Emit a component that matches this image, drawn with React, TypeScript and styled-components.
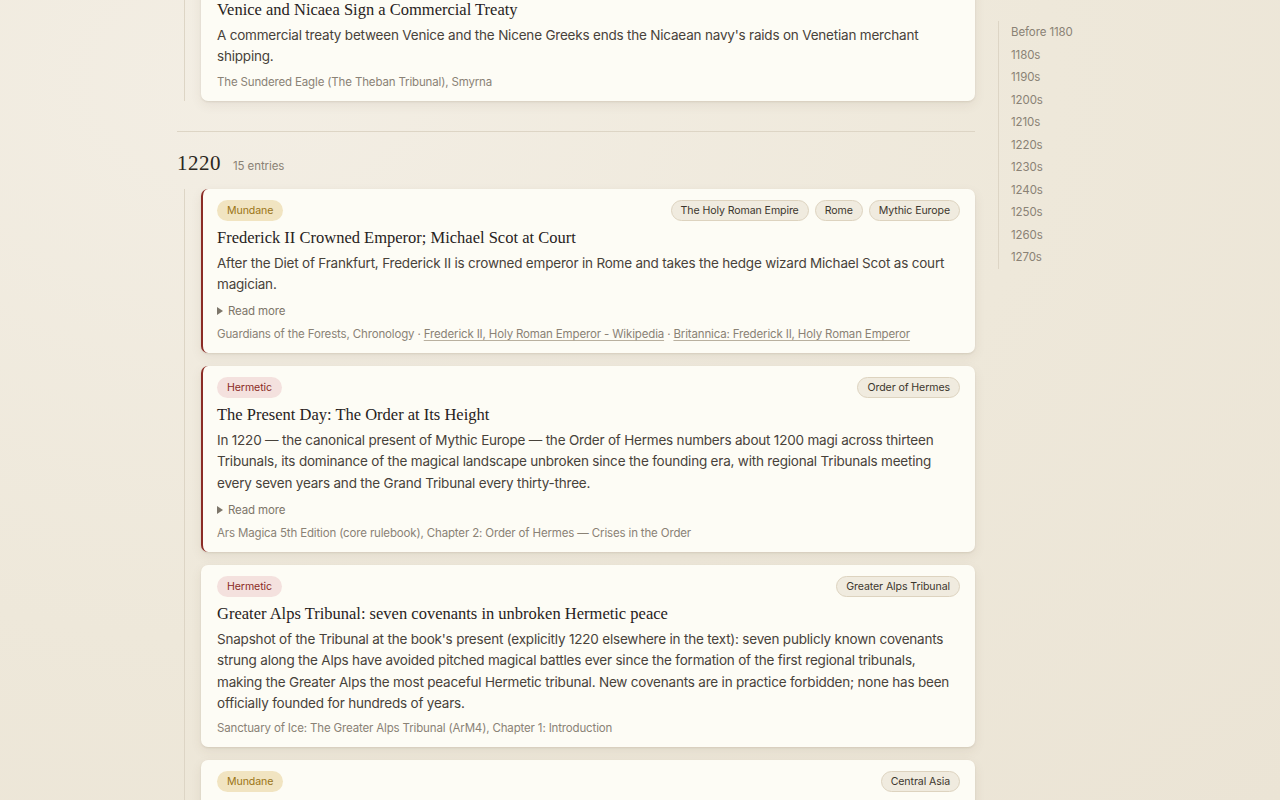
import React from 'react';
import styled, { createGlobalStyle } from 'styled-components';

type Kind = 'Mundane' | 'Hermetic';

interface Source {
  text: string;
  link?: boolean;
}

interface Entry {
  kind: Kind;
  tags: string[];
  title: string;
  body: string;
  more?: boolean;
  marked?: boolean;
  sources: Source[];
}

const GlobalStyle = createGlobalStyle`
  html, body {
    margin: 0;
    padding: 0;
    background: #efe9dc;
    font-family: Inter, "Noto Sans", sans-serif;
    overflow: hidden;
  }
  body {
    background: radial-gradient(ellipse at 20% 10%, #f3eee4 0%, #eee8da 55%, #ebe4d5 100%);
    min-height: 800px;
  }
`;

// Page frame: timeline column + decade index
const Page = styled.div`
  display: flex;
  gap: 23px;
  padding-left: 177px;
  height: 800px;
  overflow: hidden;
`;

const Main = styled.main`
  width: 798px;
  flex-shrink: 0;
`;

const Section = styled.section<{ $offset?: number }>`
  margin-top: ${(p) => p.$offset ?? 0}px;
`;

const YearHead = styled.div`
  display: flex;
  align-items: baseline;
  gap: 12px;
  height: 32px;
  margin: 19px 0 6px;
`;

const Year = styled.h2`
  margin: 0;
  font-family: "Liberation Serif", serif;
  font-weight: 400;
  font-size: 21px;
  color: #2b2620;
  letter-spacing: 0.5px;
`;

const Count = styled.span`
  font-size: 11.5px;
  letter-spacing: -0.1px;
  color: #8a8275;
`;

const Divider = styled.hr`
  border: 0;
  border-top: 1px solid #ddd5c5;
  margin: 30px 0 0;
`;

// Vertical timeline rule with cards on its right
const EntryList = styled.div`
  margin-left: 7px;
  border-left: 1px solid #ddd5c5;
  padding-left: 16px;
  display: flex;
  flex-direction: column;
  gap: 13px;
`;

const Card = styled.article<{ $marked?: boolean }>`
  box-sizing: border-box;
  background: #fdfcf5;
  border-radius: 7px;
  padding: 11px 15px 10px 14px;
  box-shadow: 0 1px 2px rgba(90, 70, 40, 0.12), 0 4px 12px rgba(90, 70, 40, 0.08);
  border-left: 2px solid ${(p) => (p.$marked ? '#8b2c26' : 'transparent')};
`;

const CardTop = styled.div`
  display: flex;
  justify-content: space-between;
  align-items: center;
  gap: 8px;
`;

const Tags = styled.div`
  display: flex;
  gap: 6px;
`;

const KindBadge = styled.span<{ $kind: Kind }>`
  display: inline-block;
  font-size: 10.6px;
  letter-spacing: -0.1px;
  line-height: 21px;
  padding: 0 10px;
  border-radius: 11px;
  background: ${(p) => (p.$kind === 'Mundane' ? '#f1e4c1' : '#f4e1de')};
  color: ${(p) => (p.$kind === 'Mundane' ? '#9a7416' : '#8b2c26')};
`;

const Tag = styled.span`
  display: inline-block;
  font-size: 10.6px;
  letter-spacing: -0.1px;
  line-height: 19px;
  padding: 0 9px;
  border-radius: 11px;
  background: #f0ebdf;
  border: 1px solid #ddd3bf;
  color: #3d372e;
`;

const Title = styled.h3`
  margin: 5px 0 3px;
  font-family: "Liberation Serif", serif;
  font-weight: 400;
  font-size: 16.5px;
  line-height: 24px;
  color: #27221c;
`;

const Body = styled.p`
  margin: 0;
  font-size: 13.5px;
  letter-spacing: -0.2px;
  line-height: 21.3px;
  color: #48423a;
`;

const ReadMore = styled.div`
  margin-top: 7px;
  font-size: 11.5px;
  letter-spacing: -0.15px;
  line-height: 18px;
  color: #7d766a;
  display: flex;
  align-items: center;
  gap: 5px;

  &::before {
    content: "";
    border-left: 6px solid #7d766a;
    border-top: 4px solid transparent;
    border-bottom: 4px solid transparent;
  }
`;

const Sources = styled.div`
  margin-top: 5px;
  font-size: 11.5px;
  letter-spacing: -0.15px;
  line-height: 18px;
  color: #8a8275;
`;

const SourceLink = styled.a`
  color: #8a8275;
  text-decoration: underline;
  text-underline-offset: 2px;
  text-decoration-color: #b9b09f;
`;

const Index = styled.nav`
  margin-top: 21px;
  align-self: flex-start;
  border-left: 1px solid #ddd5c5;
  padding: 0 0 0 12px;
  display: flex;
  flex-direction: column;
`;

const IndexItem = styled.a`
  font-size: 11.5px;
  letter-spacing: -0.1px;
  line-height: 22.5px;
  color: #8a8275;
  text-decoration: none;
`;

const earlier: Entry = {
  kind: 'Mundane',
  tags: ['Venice'],
  title: 'Venice and Nicaea Sign a Commercial Treaty',
  body: "A commercial treaty between Venice and the Nicene Greeks ends the Nicaean navy's raids on Venetian merchant shipping.",
  sources: [{ text: 'The Sundered Eagle (The Theban Tribunal), Smyrna' }],
};

const entries1220: Entry[] = [
  {
    kind: 'Mundane',
    tags: ['The Holy Roman Empire', 'Rome', 'Mythic Europe'],
    title: 'Frederick II Crowned Emperor; Michael Scot at Court',
    body: 'After the Diet of Frankfurt, Frederick II is crowned emperor in Rome and takes the hedge wizard Michael Scot as court magician.',
    more: true,
    marked: true,
    sources: [
      { text: 'Guardians of the Forests, Chronology' },
      { text: 'Frederick II, Holy Roman Emperor - Wikipedia', link: true },
      { text: 'Britannica: Frederick II, Holy Roman Emperor', link: true },
    ],
  },
  {
    kind: 'Hermetic',
    tags: ['Order of Hermes'],
    title: 'The Present Day: The Order at Its Height',
    body: 'In 1220 — the canonical present of Mythic Europe — the Order of Hermes numbers about 1200 magi across thirteen Tribunals, its dominance of the magical landscape unbroken since the founding era, with regional Tribunals meeting every seven years and the Grand Tribunal every thirty-three.',
    more: true,
    marked: true,
    sources: [{ text: 'Ars Magica 5th Edition (core rulebook), Chapter 2: Order of Hermes — Crises in the Order' }],
  },
  {
    kind: 'Hermetic',
    tags: ['Greater Alps Tribunal'],
    title: 'Greater Alps Tribunal: seven covenants in unbroken Hermetic peace',
    body: "Snapshot of the Tribunal at the book's present (explicitly 1220 elsewhere in the text): seven publicly known covenants strung along the Alps have avoided pitched magical battles ever since the formation of the first regional tribunals, making the Greater Alps the most peaceful Hermetic tribunal. New covenants are in practice forbidden; none has been officially founded for hundreds of years.",
    sources: [{ text: 'Sanctuary of Ice: The Greater Alps Tribunal (ArM4), Chapter 1: Introduction' }],
  },
  {
    kind: 'Mundane',
    tags: ['Central Asia'],
    title: 'Genghis Khan Takes Samarkand and Bukhara',
    body: 'The Mongol armies sweep through Khwarazm, sacking the great cities of Transoxiana.',
    sources: [{ text: 'Mythic Europe chronology' }],
  },
];

const decades = ['Before 1180', '1180s', '1190s', '1200s', '1210s', '1220s', '1230s', '1240s', '1250s', '1260s', '1270s'];

const EntryCard = ({ entry }: { entry: Entry }): JSX.Element => (
  <Card $marked={entry.marked}>
    <CardTop>
      <KindBadge $kind={entry.kind}>{entry.kind}</KindBadge>
      <Tags>
        {entry.tags.map((t) => <Tag key={t}>{t}</Tag>)}
      </Tags>
    </CardTop>
    <Title>{entry.title}</Title>
    <Body>{entry.body}</Body>
    {entry.more && <ReadMore>Read more</ReadMore>}
    <Sources>
      {entry.sources.map((s, i) => (
        <React.Fragment key={s.text}>
          {i > 0 && ' · '}
          {s.link ? <SourceLink href="#">{s.text}</SourceLink> : s.text}
        </React.Fragment>
      ))}
    </Sources>
  </Card>
);

const App = (): JSX.Element => (
  <>
    <GlobalStyle />
    <Page>
      <Main>
        {/* scrolled: only the tail of the 1210s list is visible */}
        <Section $offset={-39}>
          <EntryList>
            <EntryCard entry={earlier} />
          </EntryList>
          <Divider />
        </Section>
        <Section>
          <YearHead>
            <Year>1220</Year>
            <Count>15 entries</Count>
          </YearHead>
          <EntryList>
            {entries1220.map((e) => <EntryCard key={e.title} entry={e} />)}
          </EntryList>
        </Section>
      </Main>
      <Index>
        {decades.map((d) => <IndexItem key={d} href="#">{d}</IndexItem>)}
      </Index>
    </Page>
  </>
);

export default App;
